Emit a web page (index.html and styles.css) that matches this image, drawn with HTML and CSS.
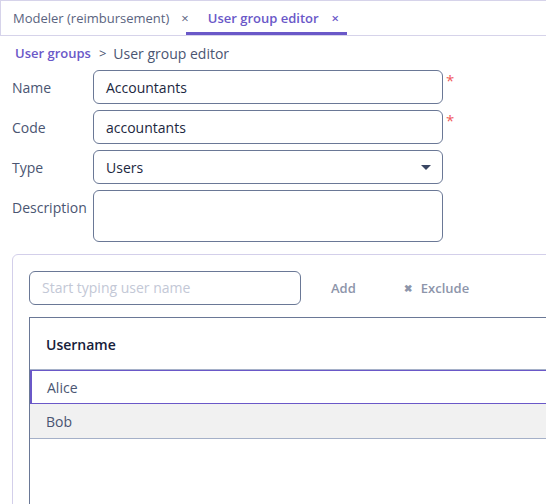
FILE: index.html
```html
<!DOCTYPE html>
<html>
<head>
<meta charset="utf-8">
<link rel="stylesheet" href="styles.css">
</head>
<body>
<div class="tabs">
  <div class="tab"><span>Modeler (reimbursement)</span><span class="close">×</span></div>
  <div class="tab active"><span>User group editor</span><span class="close">×</span></div>
</div>
<div class="crumbs"><a class="crumb-link">User groups</a><span class="sep">&gt;</span><span>User group editor</span></div>
<div class="form">
  <div class="row"><label>Name</label><div class="field">Accountants</div><span class="req">*</span></div>
  <div class="row"><label>Code</label><div class="field">accountants</div><span class="req">*</span></div>
  <div class="row"><label>Type</label><div class="field select">Users<span class="caret"></span></div></div>
  <div class="row"><label>Description</label><div class="field area"></div></div>
</div>
<div class="panel">
  <div class="toolbar">
    <div class="search">Start typing user name</div>
    <span class="btn">Add</span>
    <span class="btn"><span class="x">✖</span>Exclude</span>
  </div>
  <div class="table">
    <div class="thead">Username</div>
    <div class="tr selected">Alice</div>
    <div class="tr alt">Bob</div>
  </div>
</div>
</body>
</html>
```
FILE: styles.css
```css
html, body {
  margin: 0;
  padding: 0;
  background: #fff;
  overflow: hidden;
  width: 546px;
  height: 504px;
}
body {
  font-family: "Open Sans", "Noto Sans", sans-serif;
  font-size: 14px;
  color: #4a5572;
}
.tabs {
  display: flex;
  height: 34px;
  border: 1px solid #d6d3ea;
  border-right: none;
  width: 600px;
}
.tab {
  display: flex;
  align-items: center;
  font-size: 13px;
  color: #5a6480;
  box-sizing: border-box;
}
.tab:first-child { padding-left: 12px; }
.tab .close {
  margin-left: 12px;
  font-size: 13px;
  color: #5a6480;
}
.tab.active {
  color: #6a58c8;
  font-weight: 600;
  border-bottom: 3px solid #6a58c8;
  padding: 3px 8px 0 22px;
  margin-left: -3px;
}
.tab.active .close { color: #6a58c8; margin-left: 13px; }
.crumbs {
  display: flex;
  align-items: center;
  height: 34px;
  padding-left: 15px;
  font-size: 14px;
  color: #4a5572;
}
.crumb-link {
  color: #6a58c8;
  font-weight: 600;
  font-size: 13px;
}
.sep { margin: 0 7px 0 8px; font-size: 13px; }
.form {
  display: flex;
  flex-direction: column;
  gap: 6px;
  padding: 0 0 0 12px;
}
.row {
  display: flex;
  align-items: flex-start;
}
.row label {
  width: 81px;
  line-height: 32px;
  padding-top: 2px;
  font-size: 14px;
  color: #4a5572;
}
.field {
  width: 350px;
  height: 34px;
  box-sizing: border-box;
  border: 1px solid #6a7896;
  border-radius: 6px;
  padding: 1px 12px 0;
  line-height: 31px;
  font-size: 14px;
  color: #1c2740;
  position: relative;
}
.field.area { height: 52px; }
.caret {
  position: absolute;
  right: 11px;
  top: 14px;
  width: 0; height: 0;
  border-left: 5px solid transparent;
  border-right: 5px solid transparent;
  border-top: 5px solid #3a4663;
}
.req {
  color: #f05a5a;
  font-size: 15px;
  margin-left: 3px;
  line-height: 20px;
}
.panel {
  margin: 12px 0 0 12px;
  width: 600px;
  height: 300px;
  border: 1px solid #d3cfea;
  border-radius: 6px;
  padding: 16px;
  box-sizing: border-box;
}
.toolbar {
  display: flex;
  align-items: center;
  height: 34px;
}
.search {
  width: 272px;
  height: 34px;
  box-sizing: border-box;
  border: 1px solid #6a7896;
  border-radius: 6px;
  padding: 0 12px;
  line-height: 32px;
  color: #c3c8d6;
  font-size: 14px;
}
.btn {
  color: #8d95aa;
  font-weight: 600;
  font-size: 13px;
  margin-left: 30px;
}
.btn + .btn { margin-left: 48px; }
.x { font-size: 10px; margin-right: 9px; position: relative; top: -1px; }
.table {
  margin-top: 12px;
  border-left: 1px solid #6a7896;
  border-top: 1px solid #6a7896;
  height: 200px;
}
.thead {
  height: 52px;
  line-height: 51px;
  padding: 1px 0 0 16px;
  font-weight: 600;
  color: #16203a;
  border-bottom: 1px solid #a5b0c8;
  box-sizing: border-box;
}
.tr {
  height: 34px;
  line-height: 31px;
  padding: 1px 0 0 16px;
  color: #4a5572;
  box-sizing: border-box;
}
.tr.selected {
  border: 1px solid #6a58c8;
  border-left-width: 2px;
  padding-left: 15px;
}
.tr.alt {
  background: #f1f1f1;
  border-bottom: 1px solid #a5b0c8;
  height: 35px;
  line-height: 33px;
}
```
